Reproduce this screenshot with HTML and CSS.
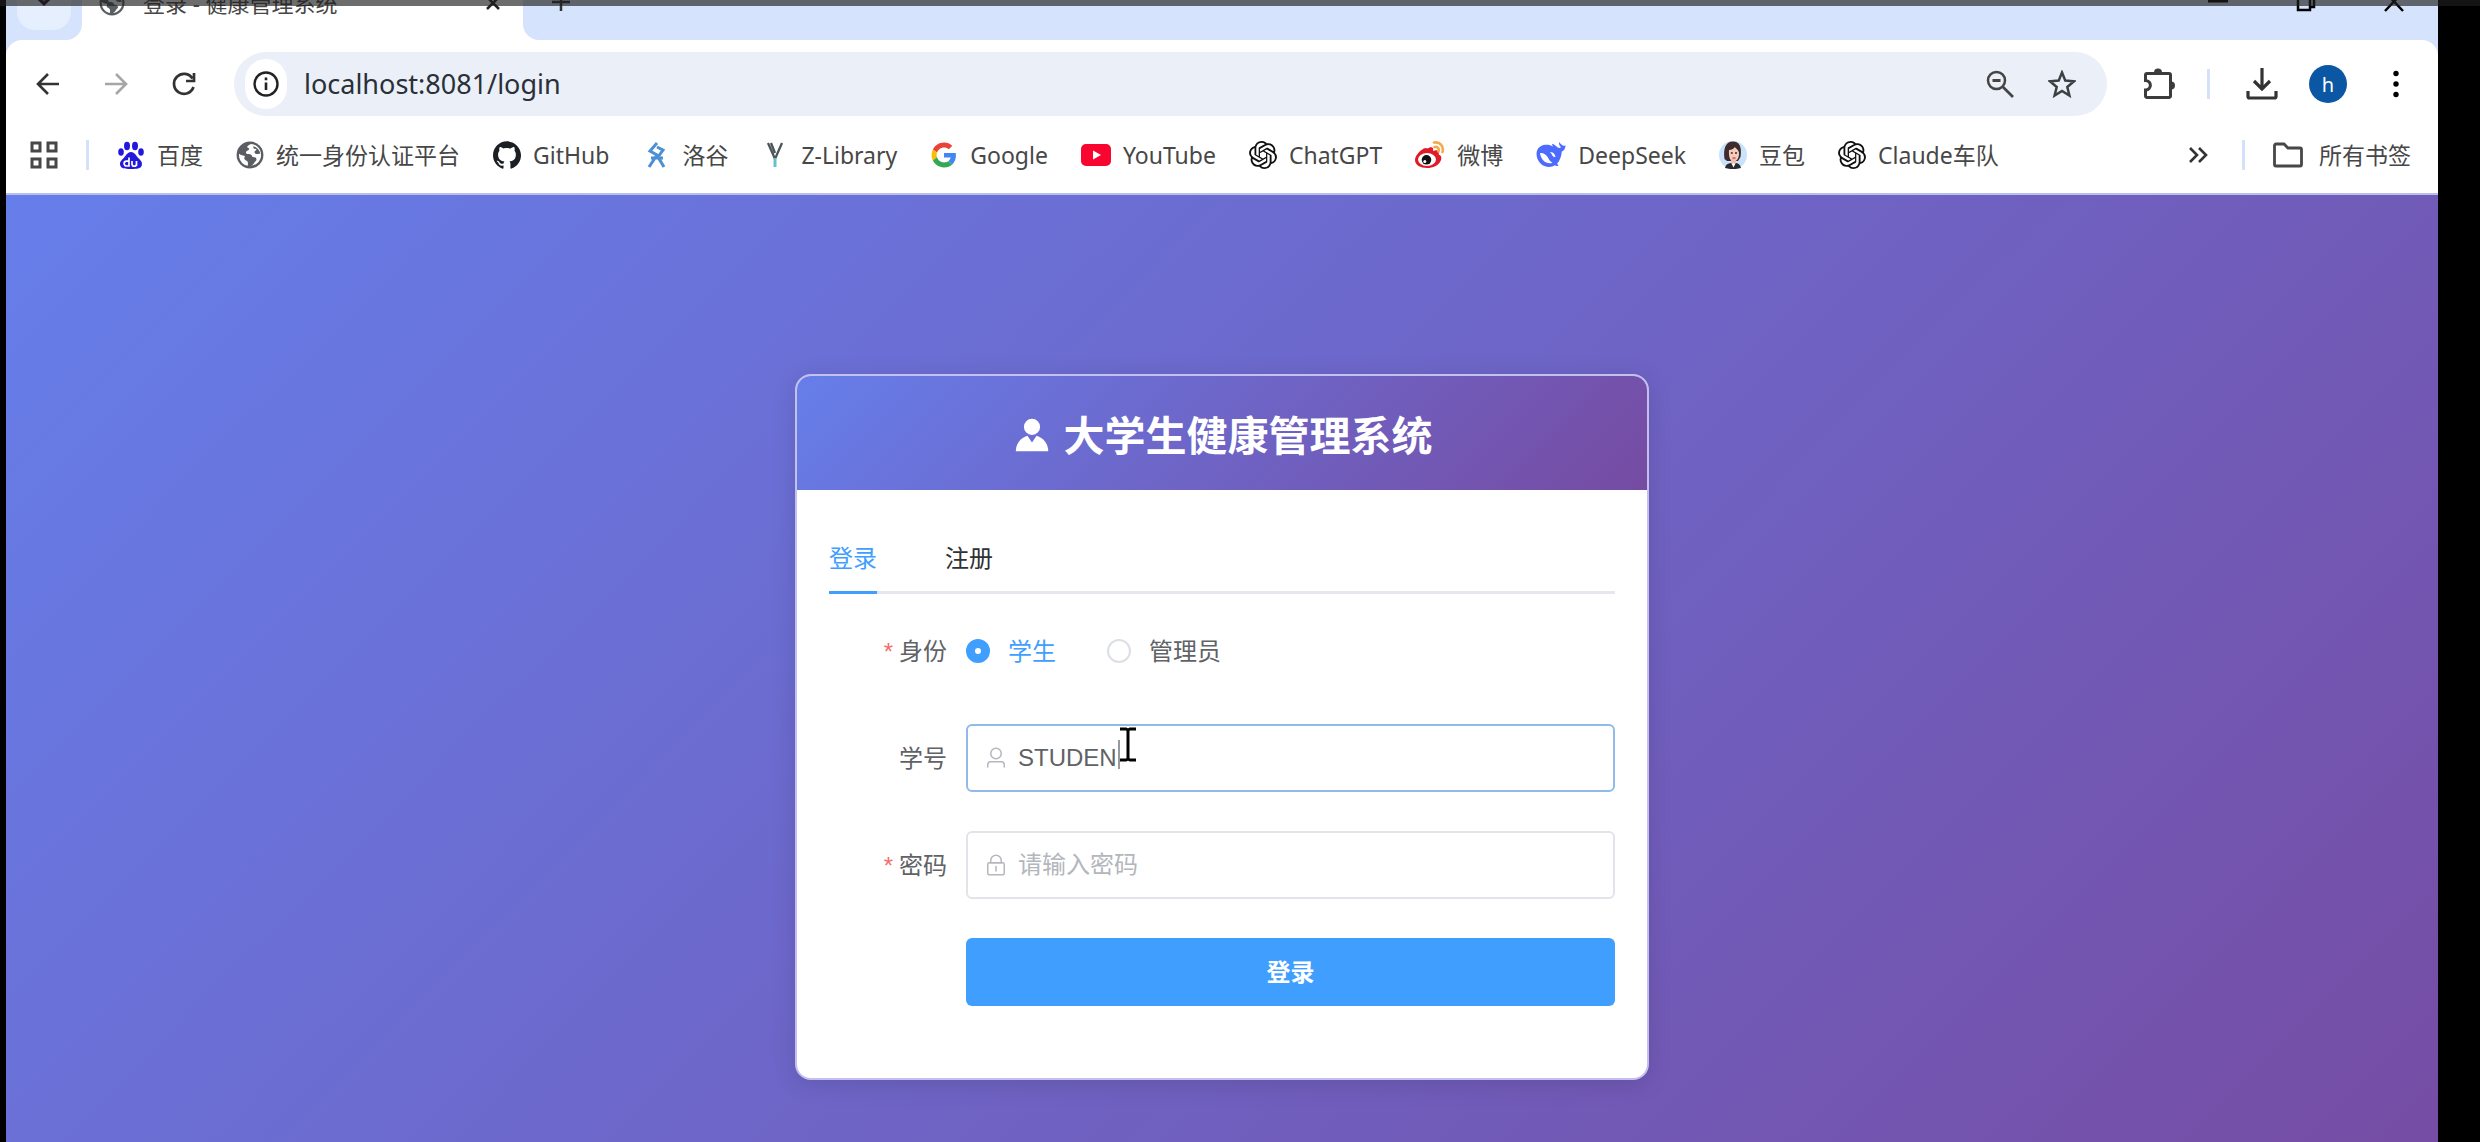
FILE: index.html
```html
<!DOCTYPE html>
<html lang="zh-CN">
<head>
  <meta charset="UTF-8" />
  <meta name="viewport" content="width=device-width, initial-scale=1.0" />
  <title>登录 - 健康管理系统</title>
  <link rel="stylesheet" href="styles.css">
</head>
<body>
  <!-- Shared icons -->
  <svg class="sprite" aria-hidden="true">
    <symbol id="globe" viewBox="0 0 24 24">
      <circle cx="12" cy="12" r="11.5" fill="#5a5d61"/>
      <path fill="#fff" d="M13 2.6c-1.500 .5-3 1.400-3.600 2.700 1.600.3 2.200 1.200 1.600 2.200-.6.900-2.200.8-2.400 2-.2 1.100.6 1.700 2 1.600 2-.1 3 .9 3.300 2.300.8.400 2.400.2 3.200 1.200 1 1.200.2 2.600-1 3.200-.6 1.400-1.500 2.600-3.200 3.400 4.900-.4 8.600-4.500 8.600-9.300C21.500 7 17.800 2.900 13 2.600zM2.600 11c-.5 5 2.800 9.400 7.400 10.300.2-1.300.6-2.500-.2-3.700-.8-1.100-2.400-1-2.700-2.500-.1-1 .3-1.700.7-2.200-1.500-.300-3.600-.6-5.200-1.900z"/>
      <path fill="#5a5d61" d="M15 4.500c-.8 1.600.8 2.500 2.500 2.300.2 1.400-1.900 1.400-1.600 3 .3 1.300 2 1.500 4.900 1.200-.3-2.900-2.500-5.700-5.800-6.500z"/>
    </symbol>
    <symbol id="openai" viewBox="0 0 24 24">
      <path fill="#111" d="M22.2819 9.8211a5.9847 5.9847 0 0 0-.5157-4.9108 6.0462 6.0462 0 0 0-6.5098-2.9A6.0651 6.0651 0 0 0 4.9807 4.1818a5.9847 5.9847 0 0 0-3.9977 2.9 6.0462 6.0462 0 0 0 .7427 7.0966 5.98 5.98 0 0 0 .511 4.9107 6.051 6.051 0 0 0 6.5146 2.9001A5.9847 5.9847 0 0 0 13.2599 24a6.0557 6.0557 0 0 0 5.7718-4.2058 5.9894 5.9894 0 0 0 3.9977-2.9001 6.0557 6.0557 0 0 0-.7475-7.0729zm-9.022 12.6081a4.4755 4.4755 0 0 1-2.8764-1.0408l.1419-.0804 4.7783-2.7582a.7948.7948 0 0 0 .3927-.6813v-6.7369l2.02 1.1686a.071.071 0 0 1 .038.052v5.5826a4.504 4.504 0 0 1-4.4945 4.4944zm-9.6607-4.1254a4.4708 4.4708 0 0 1-.5346-3.0137l.142.0852 4.783 2.7582a.7712.7712 0 0 0 .7806 0l5.8428-3.3685v2.3324a.0804.0804 0 0 1-.0332.0615L9.74 19.9502a4.4992 4.4992 0 0 1-6.1408-1.6464zM2.3408 7.8956a4.485 4.485 0 0 1 2.3655-1.9728V11.6a.7664.7664 0 0 0 .3879.6765l5.8144 3.3543-2.0201 1.1685a.0757.0757 0 0 1-.071 0l-4.8303-2.7865A4.504 4.504 0 0 1 2.3408 7.872zm16.5963 3.8558L13.1038 8.364 15.1192 7.2a.0757.0757 0 0 1 .071 0l4.8303 2.7913a4.4944 4.4944 0 0 1-.6765 8.1042v-5.6772a.79.79 0 0 0-.407-.667zm2.0107-3.0231l-.142-.0852-4.7735-2.7818a.7759.7759 0 0 0-.7854 0L9.409 9.2297V6.8974a.0662.0662 0 0 1 .0284-.0615l4.8303-2.7866a4.4992 4.4992 0 0 1 6.6802 4.66zM8.3065 12.863l-2.02-1.1638a.0804.0804 0 0 1-.038-.0567V6.0742a4.4992 4.4992 0 0 1 7.3757-3.4537l-.142.0805L8.704 5.459a.7948.7948 0 0 0-.3927.6813zm1.0976-2.3654l2.602-1.4998 2.6069 1.4998v2.9994l-2.5974 1.4997-2.6067-1.4997Z"/>
    </symbol>
  </svg>

  <div class="shade"></div>
  <div class="browser">
    <!-- Tab strip -->
    <div class="tab-strip">
      <div class="tab-lead">
        <button class="tab-search" type="button" aria-label="搜索标签页">
          <svg viewBox="0 0 20 20"><path d="M3 6l7 7 7-7" fill="#a04fd0" stroke="#1d1226" stroke-width="3"/></svg>
        </button>
      </div>
      <div class="tab">
        <svg class="tab-icon"><use href="#globe"/></svg>
        <span class="tab-title">登录 - 健康管理系统</span>
        <button class="tab-close" type="button" aria-label="关闭">
          <svg viewBox="0 0 16 16"><path d="M2 2l12 12M14 2L2 14" stroke="#222" stroke-width="2.500"/></svg>
        </button>
      </div>
      <div class="tab-rest">
        <button class="tab-new" type="button" aria-label="新标签页">
          <svg viewBox="0 0 20 20"><path d="M10 1v18M1 10h18" stroke="#333" stroke-width="2.500"/></svg>
        </button>
        <div class="window-buttons">
          <button type="button" aria-label="最小化"><svg viewBox="0 0 20 20"><path d="M0 9h20" stroke="#000" stroke-width="3"/></svg></button>
          <button type="button" aria-label="还原"><svg viewBox="0 0 20 20"><path d="M2 5h12v13H2zM6 5V1h12v14h-4" fill="none" stroke="#000" stroke-width="2.500"/></svg></button>
          <button type="button" aria-label="关闭窗口"><svg viewBox="0 0 20 20"><path d="M1 0l18 19M19 0L1 19" stroke="#000" stroke-width="2.500"/></svg></button>
        </div>
      </div>
    </div>

    <!-- Toolbar -->
    <div class="toolbar">
      <div class="nav-buttons">
        <button type="button" aria-label="后退"><svg viewBox="0 0 24 24"><path d="M23 12H3M12 2L2 12l10 10" fill="none" stroke="#333" stroke-width="2.600"/></svg></button>
        <button type="button" aria-label="前进"><svg viewBox="0 0 24 24"><path d="M1 12h20M12 2l10 10-10 10" fill="none" stroke="#a6a6a6" stroke-width="2.600"/></svg></button>
        <button type="button" aria-label="刷新"><svg viewBox="0 0 24 24"><path d="M21.500 15A10 10 0 1 1 20.500 6.500M22 1v8h-8" fill="none" stroke="#333" stroke-width="2.700"/></svg></button>
      </div>
      <div class="address">
        <button class="site-info" type="button" aria-label="网站信息">
          <svg viewBox="0 0 26 26"><circle cx="13" cy="13" r="11.500" fill="none" stroke="#222" stroke-width="2.400"/><path d="M13 11.500V19M13 6.500v2.700" stroke="#222" stroke-width="2.600"/></svg>
        </button>
        <input class="url" type="text" value="localhost:8081/login" aria-label="地址" />
        <button type="button" aria-label="缩放"><svg viewBox="0 0 28 28"><circle cx="10.500" cy="10.500" r="8.500" fill="none" stroke="#444" stroke-width="2.500"/><path d="M6.500 10.500h8M17 17l10 10" stroke="#444" stroke-width="2.800"/></svg></button>
        <button type="button" aria-label="收藏"><svg viewBox="0 0 28 28"><path d="M14 2.500l3.300 8.100 8.700.7-6.700 5.700 2.100 8.500L14 20.900l-7.400 4.600 2.100-8.500L2 11.300l8.700-.7z" fill="none" stroke="#3c4043" stroke-width="2.500"/></svg></button>
      </div>
      <div class="tools">
        <button type="button" aria-label="扩展程序"><svg class="puzzle" viewBox="0 0 32 32"><path d="M4 5.500h22a1.500 1.500 0 0 1 1.500 1.500v21a1.500 1.500 0 0 1-1.500 1.500H4A1.500 1.500 0 0 1 2.500 28v-6c6.500-.5 6.500-9 0-9.500V7A1.500 1.500 0 0 1 4 5.500z" fill="none" stroke="#3c3c3c" stroke-width="3"/><path d="M11 4.500a4 4 0 0 1 8 0zM28 13.500a4 4 0 0 1 0 8z" fill="#3c3c3c"/></svg></button>
        <span class="divider"></span>
        <button type="button" aria-label="下载"><svg class="puzzle" viewBox="0 0 32 32"><path d="M16 0v21M8 13l8 8 8-8M2 23v5.500a1.500 1.500 0 0 0 1.500 1.500h25a1.500 1.500 0 0 0 1.500-1.500V23" fill="none" stroke="#333" stroke-width="3.200"/></svg></button>
        <button class="avatar" type="button" aria-label="账号">h</button>
        <button type="button" aria-label="菜单"><svg viewBox="0 0 28 28"><circle cx="14" cy="3.500" r="2.700"/><circle cx="14" cy="14" r="2.700"/><circle cx="14" cy="24.500" r="2.700"/></svg></button>
      </div>
    </div>

    <!-- Bookmarks -->
    <div class="bookmarks">
      <button class="apps" type="button" aria-label="应用">
        <svg viewBox="0 0 28 28"><path d="M2 2h8v8H2zM18 2h8v8h-8zM2 18h8v8H2zM18 18h8v8h-8z" fill="none" stroke="#474747" stroke-width="3"/></svg>
      </button>
      <span class="divider"></span>
      <nav class="links">
        <a href="#"><svg viewBox="0 0 28 28"><g fill="#2319dc"><ellipse cx="10" cy="5" rx="3" ry="4.200"/><ellipse cx="18" cy="5" rx="3" ry="4.200"/><ellipse cx="4" cy="11" rx="2.800" ry="3.800"/><ellipse cx="24" cy="11" rx="2.800" ry="3.800"/><path d="M14 11c4 0 5 4 7.500 6.300 2.500 2.400 4 3.700 3.300 7C24 27.500 21 28 14 28s-10-.5-10.800-3.700c-.7-3.300.8-4.600 3.300-7C9 15 10 11 14 11z"/></g><path d="M12 16.500V25H9.500a2.300 2.300 0 0 1 0-4.800H12M15 20v3a2 2 0 0 0 4.500 0v-3V25" fill="none" stroke="#fff" stroke-width="1.700"/></svg>百度</a>
        <a href="#"><svg><use href="#globe"/></svg>统一身份认证平台</a>
        <a href="#"><svg viewBox="0 0 24 24"><path fill="#1b1f23" d="M12 .297c-6.630 0-12 5.373-12 12 0 5.303 3.438 9.800 8.205 11.385.6.113.82-.258.82-.577 0-.285-.01-1.040-.015-2.040-3.338.724-4.042-1.610-4.042-1.610C4.422 18.070 3.633 17.700 3.633 17.700c-1.087-.744.084-.729.084-.729 1.205.084 1.838 1.236 1.838 1.236 1.070 1.835 2.809 1.305 3.495.998.108-.776.417-1.305.76-1.605-2.665-.3-5.466-1.332-5.466-5.930 0-1.310.465-2.380 1.235-3.220-.135-.303-.54-1.523.105-3.176 0 0 1.005-.322 3.300 1.230.96-.267 1.980-.399 3-.405 1.020.006 2.040.138 3 .405 2.280-1.552 3.285-1.230 3.285-1.230.645 1.653.24 2.873.12 3.176.765.84 1.230 1.910 1.230 3.220 0 4.610-2.805 5.625-5.475 5.920.42.36.81 1.096.81 2.220 0 1.606-.015 2.896-.015 3.286 0 .315.21.69.825.57C20.565 22.092 24 17.592 24 12.297c0-6.627-5.373-12-12-12"/></svg>GitHub</a>
        <a href="#"><svg viewBox="0 0 28 28"><path d="M15 2l-7 8 7 4-8 12M15 6l6 3-5 7 6 10M9 17h12" fill="none" stroke="#4b8fd4" stroke-width="3"/></svg>洛谷</a>
        <a href="#"><svg viewBox="0 0 28 28"><path d="M7 2l7 16 7-16M10 2l4 10" fill="none" stroke="#4d5557" stroke-width="2.300"/><path d="M14 17v9" stroke="#63c3cd" stroke-width="3"/></svg>Z-Library</a>
        <a href="#"><svg viewBox="-3 -3 54 54"><path fill="#EA4335" d="M24 9.500c3.540 0 6.710 1.220 9.210 3.600l6.850-6.850C35.900 2.380 30.470 0 24 0 14.620 0 6.510 5.380 2.560 13.220l7.980 6.190C12.430 13.720 17.740 9.500 24 9.500z"/><path fill="#4285F4" d="M46.980 24.550c0-1.570-.15-3.090-.38-4.550H24v9.020h12.940c-.58 2.960-2.260 5.480-4.780 7.180l7.730 6c4.510-4.180 7.090-10.360 7.090-17.650z"/><path fill="#FBBC05" d="M10.530 28.590c-.48-1.450-.76-2.990-.76-4.590s.27-3.140.76-4.590l-7.980-6.190C.92 16.460 0 20.120 0 24c0 3.880.92 7.540 2.560 10.780l7.970-6.190z"/><path fill="#34A853" d="M24 48c6.480 0 11.930-2.130 15.890-5.810l-7.730-6c-2.150 1.450-4.920 2.300-8.160 2.300-6.260 0-11.570-4.220-13.470-9.910l-7.980 6.190C6.510 42.620 14.620 48 24 48z"/></svg>Google</a>
        <a href="#"><svg class="wide" viewBox="0 0 30 30"><rect x="0" y="4" width="30" height="22" rx="5" fill="#f8062f"/><path d="M12 10.500v9l8-4.500z" fill="#fff"/></svg>YouTube</a>
        <a href="#"><svg><use href="#openai"/></svg>ChatGPT</a>
        <a href="#"><svg class="wide" viewBox="0 0 30 30"><path d="M12.500 8.500c4-2.500 6.500-1.500 5.500 2.500 4-1.500 7-.5 5.700 3.500 2.800 1 3.300 3.500 2 6.200C23.500 25.500 18 28 12 28 5.500 28 0 25 0 20c0-4.500 6-11 10.500-12z" fill="#df1b28"/><ellipse cx="12" cy="19.500" rx="9" ry="6.500" fill="#fff"/><circle cx="11.500" cy="19.800" r="4.800" fill="#111"/><circle cx="9.800" cy="21.500" r="1.500" fill="#fff"/><path d="M19 2.500c6-1 10 3.500 8.500 9.500M19.500 7c3-.5 5 1.500 4 4.500" fill="none" stroke="#f6a94a" stroke-width="2.600" stroke-linecap="round"/></svg>微博</a>
        <a href="#"><svg class="wide" viewBox="0 0 30 30"><path fill="#4d6bfe" d="M29.500 5.200c-1.600 1-2.600.5-3.800-.4-1-.8-1.800-1.800-2.500-2.900-.6 2.500.4 4 1.800 5.300-1 1-2.200 1-3.200.3-2-1.400-3.700-3.400-5.500-3.400-.8.600 1 1.800.3 2.300C13.500 4 3 3.300.8 11.500-.7 18.500 4.500 26.500 12.500 27c2.600.1 4.600-.5 6.300-1.700 1 .6 2.500 1 3.500.4.2-.8-.9-1.200-1.200-1.900 3-3.500 4.300-7.600 4.700-12.300 2.300-.7 3.700-3.200 3.700-6.300z"/><path fill="#fff" d="M4 13c4-.5 7 2.500 8.500 5.500 1 2 2.300 3.400 4 4.200-5.500 2-11.500-2-12.500-9.700zM14 12.500c2.500-.8 5 1.200 5.500 4.500-2 .5-3-.8-3.500-2.200-.4-.9-1-1.700-2-2.300z"/></svg>DeepSeek</a>
        <a href="#"><svg viewBox="0 0 28 28"><circle cx="14" cy="14" r="14" fill="#c9e3fb"/><path d="M5.500 18C4 8 6.500 .5 14 .5 20.500 .5 23 6 21.500 16L19 20H8z" fill="#3d2b2d"/><path d="M10 9c3 0 5-1.500 6-3 1 2 3.500 2.500 4 6 .3 5-2.500 8.500-5.500 8.500s-5-4-4.500-11.500z" fill="#f5cdbd"/><path d="M12 18h5v5h-5z" fill="#efbfae"/><path d="M6 27c1-4 3-4.500 6-5l2.500 2L17 22c3 .5 4 1.500 5 5-5 1.500-11 1.500-16 0z" fill="#2a2a32"/><path d="M12.500 22.500l2 4 2-4z" fill="#fff"/><path d="M13.500 17h3" stroke="#cf5452" stroke-width="1.500"/><path d="M11.800 12h2M16 12h2" stroke="#3d2b2d" stroke-width="1.500"/></svg>豆包</a>
        <a href="#"><svg><use href="#openai"/></svg>Claude车队</a>
      </nav>
      <button class="more" type="button" aria-label="更多书签"><svg viewBox="0 0 20 20"><path d="M2 3l7 7-7 7M11 3l7 7-7 7" fill="none" stroke="#333" stroke-width="2.600"/></svg></button>
      <span class="divider"></span>
      <a class="all" href="#"><svg class="wide" viewBox="0 0 30 30"><path d="M3 4h8l4 4h12a1.500 1.500 0 0 1 1.500 1.500v15A1.500 1.500 0 0 1 27 26H3a1.500 1.500 0 0 1-1.500-1.500v-19A1.500 1.500 0 0 1 3 4z" fill="none" stroke="#474747" stroke-width="2.800"/></svg>所有书签</a>
    </div>

    <!-- Login page -->
    <main class="login-page">
      <div class="card">
        <div class="card-header">
          <svg viewBox="0 0 1024 1024"><path fill="#fff" d="M628.736 528.896A416 416 0 0 1 928 928H96a415.872 415.872 0 0 1 299.264-399.104L512 704l116.736-175.104zM720 304a208 208 0 1 1-416 0 208 208 0 0 1 416 0z"/></svg>
          <h1>大学生健康管理系统</h1>
        </div>
        <div class="card-body">
          <div class="form-tabs" role="tablist">
            <button class="active" type="button" role="tab" aria-selected="true">登录</button>
            <button type="button" role="tab" aria-selected="false">注册</button>
          </div>
          <form id="loginForm">
            <div class="form-row" role="radiogroup" aria-labelledby="role_label">
              <span class="form-label required" id="role_label">身份</span>
              <div class="radios">
                <label><input type="radio" name="role" value="student" checked /><span>学生</span></label>
                <label><input type="radio" name="role" value="admin" /><span>管理员</span></label>
              </div>
            </div>
            <div class="form-row">
              <label class="form-label" for="student_id">学号</label>
              <div class="field focused">
                <svg viewBox="0 0 1024 1024"><path fill="#b4b7bd" d="M512 512a192 192 0 1 0 0-384 192 192 0 0 0 0 384zm0 64a256 256 0 1 1 0-512 256 256 0 0 1 0 512zm320 320v-96a96 96 0 0 0-96-96H288a96 96 0 0 0-96 96v96a32 32 0 1 1-64 0v-96a160 160 0 0 1 160-160h448a160 160 0 0 1 160 160v96a32 32 0 1 1-64 0z"/></svg>
                <input type="text" id="student_id" name="student_id" value="STUDEN" />
                <svg class="pointer" viewBox="0 0 20 44"><path d="M1 13v29" stroke="#777" stroke-width="1.500"/><path d="M2 2h6l2 1 2-1h6M10 3v29M2 33h6l2-1 2 1h6" fill="none" stroke="#000" stroke-width="3"/></svg>
              </div>
            </div>
            <div class="form-row">
              <label class="form-label required" for="password">密码</label>
              <div class="field">
                <svg viewBox="0 0 1024 1024"><path fill="#b4b7bd" d="M224 448a32 32 0 0 0-32 32v384a32 32 0 0 0 32 32h576a32 32 0 0 0 32-32V480a32 32 0 0 0-32-32H224zm0-64h576a96 96 0 0 1 96 96v384a96 96 0 0 1-96 96H224a96 96 0 0 1-96-96V480a96 96 0 0 1 96-96z"/><path fill="#b4b7bd" d="M512 544a32 32 0 0 1 32 32v192a32 32 0 1 1-64 0V576a32 32 0 0 1 32-32zm192-160v-64a192 192 0 1 0-384 0v64h384zM512 64a256 256 0 0 1 256 256v128H256V320A256 256 0 0 1 512 64z"/></svg>
                <input type="password" id="password" name="password" placeholder="请输入密码" />
              </div>
            </div>
            <div class="form-row">
              <span class="form-label"></span>
              <button class="submit" type="submit">登录</button>
            </div>
          </form>
        </div>
      </div>
    </main>
  </div>
</body>
</html>
```
FILE: styles.css
```css
* {
  box-sizing: border-box;
}

body {
  margin: 0;
  height: 100vh;
  overflow: hidden;
  background: #000;
  font-family: "Noto Sans", "Noto Sans CJK SC", sans-serif;
  font-size: 23px;
  color: #474747;
}

button {
  display: flex;
  align-items: center;
  justify-content: center;
  padding: 0;
  border: none;
  background: none;
  font: inherit;
  cursor: pointer;
}

a {
  color: inherit;
  text-decoration: none;
}

svg {
  display: block;
  flex: none;
}

.sprite {
  position: absolute;
  width: 0;
  height: 0;
}

.shade {
  position: absolute;
  top: 0;
  left: 0;
  right: 0;
  height: 6px;
  background: rgba(30, 30, 30, 0.65);
  z-index: 2;
}

.browser {
  display: flex;
  flex-direction: column;
  height: 100%;
  margin: 0 42px 0 6px;
  overflow: hidden;
  background: #d5e3fd;
}

/* Tab strip */
.tab-strip {
  display: flex;
  flex: none;
  height: 40px;
  background: #fff;
}

.tab-lead {
  width: 76px;
  background: #d5e3fd;
  border-bottom-right-radius: 16px;
}

.tab-search {
  width: 54px;
  height: 30px;
  margin-left: 11px;
  background: #e5effd;
  border-radius: 0 0 18px 18px;
  align-items: flex-start;
}

.tab-search svg {
  width: 20px;
  margin-top: -9px;
}

.tab {
  display: flex;
  align-items: center;
  gap: 18px;
  width: 441px;
  height: 6px;
  padding: 0 22px 0 17px;
  font-size: 22px;
  line-height: 32px;
}

.tab-icon {
  width: 26px;
  height: 26px;
}

.tab-title {
  flex: 1;
  white-space: nowrap;
}

.tab-close svg {
  width: 16px;
}

.tab-rest {
  display: flex;
  flex: 1;
  align-items: flex-start;
  justify-content: space-between;
  padding: 0 34px 0 28px;
  background: #d5e3fd;
  border-bottom-left-radius: 16px;
}

.tab-new svg {
  width: 20px;
  margin-top: -8px;
}

.window-buttons {
  display: flex;
  gap: 68px;
}

.window-buttons svg {
  width: 20px;
  margin-top: -8px;
}

/* Toolbar */
.toolbar {
  display: flex;
  flex: none;
  align-items: center;
  height: 88px;
  background: #fff;
  border-radius: 16px 16px 0 0;
}

.nav-buttons {
  display: flex;
  gap: 44px;
  padding: 0 38px 0 30px;
}

.nav-buttons svg {
  width: 24px;
}

.address {
  display: flex;
  flex: 1;
  align-items: center;
  gap: 34px;
  height: 64px;
  padding: 0 31px 0 11px;
  background: #ebeff8;
  border-radius: 32px;
}

.address svg {
  width: 28px;
}

.site-info {
  width: 42px;
  height: 50px;
  background: #fff;
  border-radius: 21px;
}

.address .site-info svg {
  width: 26px;
}

.url {
  flex: 1;
  margin-left: -17px;
  padding: 0 0 2px;
  border: none;
  outline: none;
  background: none;
  font: inherit;
  font-size: 27px;
  color: #2a2f38;
}

.tools {
  display: flex;
  align-items: center;
  padding: 0 28px 0 36px;
}

.puzzle {
  width: 32px;
}

.tools .divider {
  margin: 0 36px 0 32px;
}

.divider {
  flex: none;
  width: 3px;
  height: 30px;
  background: #d3e1fb;
}

.avatar {
  width: 38px;
  height: 38px;
  margin: 0 35px 0 31px;
  border-radius: 50%;
  background: #0b57a4;
  color: #fff;
  font-size: 20px;
}

.tools svg:not(.puzzle) {
  width: 28px;
}

/* Bookmarks bar */
.bookmarks {
  display: flex;
  flex: none;
  align-items: center;
  height: 67px;
  padding: 0 27px 12px 24px;
  background: #fff;
  border-bottom: 2px solid #b9bfe8;
  white-space: nowrap;
}

.bookmarks svg {
  width: 28px;
  height: 28px;
}

.bookmarks .divider {
  margin: 0 28px;
}

.bookmarks .more {
  margin-right: 6px;
}

.links {
  display: flex;
  flex: 1;
  gap: 33px;
}

.links a,
.all {
  display: flex;
  align-items: center;
  gap: 12px;
  line-height: 32px;
}

.all {
  gap: 16px;
}

.bookmarks .wide {
  width: 30px;
  height: 30px;
}

.bookmarks .more svg {
  width: 20px;
  height: 20px;
}

/* Login page */
.login-page {
  flex: none;
  padding: 179px 0;
  background: linear-gradient(135deg, #667eea 0%, #764ba2 100%);
}

.card {
  width: 100%;
  max-width: 854px;
  margin: 0 auto;
  background: #fff;
  border: 2px solid #c3c0f0;
  border-radius: 16px;
  box-shadow: 0 4px 24px rgba(0, 0, 0, 0.12);
  overflow: hidden;
}

.card-header {
  display: flex;
  align-items: center;
  justify-content: center;
  gap: 12px;
  height: 114px;
  padding-top: 3px;
  background: linear-gradient(135deg, #667eea 0%, #764ba2 100%);
  color: #fff;
}

.card-header svg {
  width: 40px;
}

h1 {
  margin: 0;
  font-size: 41px;
  font-weight: 700;
  line-height: 60px;
}

.card-body {
  padding: 32px 32px 72px;
  font-family: "Liberation Sans", "Noto Sans CJK SC", sans-serif;
  font-size: 24px;
  color: #606266;
}

.form-tabs {
  display: flex;
  gap: 68px;
  height: 72px;
  margin-bottom: 23px;
  border-bottom: 3px solid #e4e7ed;
}

.form-tabs button {
  height: 72px;
  border-bottom: 3px solid transparent;
  color: #303133;
}

.form-tabs .active {
  color: #409eff;
  border-bottom-color: #409eff;
}

form {
  display: flex;
  flex-direction: column;
  gap: 39px;
}

.form-row {
  display: flex;
  align-items: center;
  gap: 19px;
  height: 68px;
}

.form-label {
  width: 118px;
  padding-bottom: 3px;
  text-align: right;
}

.required::before {
  content: "*";
  margin-right: 6px;
  color: #f56c6c;
}

.radios {
  display: flex;
  gap: 51px;
}

.radios label {
  display: flex;
  align-items: center;
  gap: 18px;
}

.radios span {
  padding-bottom: 3px;
}

.radios input {
  appearance: none;
  width: 24px;
  height: 24px;
  margin: 0;
  border: 2px solid #dcdfe6;
  border-radius: 50%;
}

.radios input:checked {
  border: 9px solid #409eff;
}

.radios input:checked + span {
  color: #409eff;
}

.field {
  position: relative;
  display: flex;
  flex: 1;
  align-items: center;
  gap: 10px;
  height: 68px;
  padding: 0 16px;
  border: 2px solid #e2e4e9;
  border-radius: 6px;
}

.field.focused {
  border-color: #8fbaea;
}

.field svg {
  width: 24px;
}

.field input {
  flex: 1;
  min-width: 0;
  padding: 0;
  border: none;
  outline: none;
  background: none;
  font: inherit;
  color: #606266;
}

.field input::placeholder {
  color: #b3b6bc;
}

.field .pointer {
  position: absolute;
  left: 150px;
  top: 1px;
  width: 20px;
}

.submit {
  flex: 1;
  height: 68px;
  padding-bottom: 4px;
  border-radius: 6px;
  background: #409eff;
  color: #fff;
  font-weight: 700;
}
```
